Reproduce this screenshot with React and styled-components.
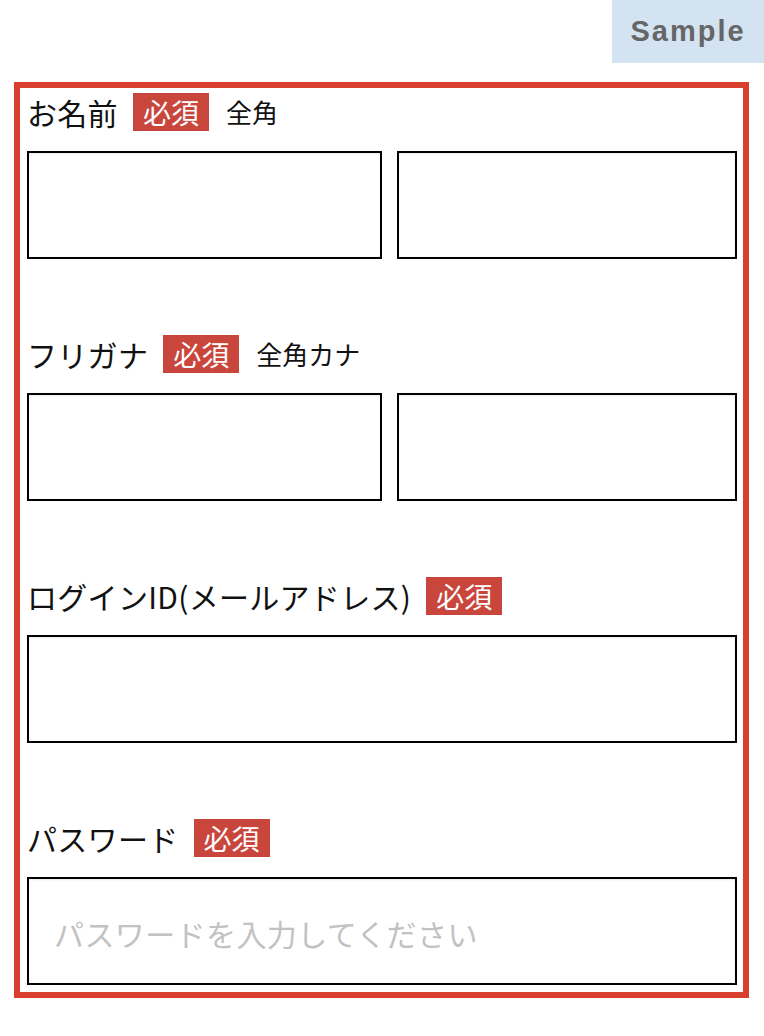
import React from 'react';
import styled, { createGlobalStyle } from 'styled-components';

const GlobalStyle = createGlobalStyle`
  body {
    margin: 0;
    background: #fff;
    font-family: "Noto Sans CJK JP", "Noto Sans", sans-serif;
    color: #111;
  }
`;

const Header = styled.header`
  display: flex;
  justify-content: flex-end;
`;

const SampleTag = styled.div`
  width: 152px;
  height: 63px;
  display: flex;
  align-items: center;
  justify-content: center;
  background: #d3e3f2;
  color: #666;
  font-family: "Liberation Sans", Arial, sans-serif;
  font-weight: bold;
  font-size: 29px;
  letter-spacing: 2px;
`;

const Frame = styled.form`
  margin: 19px 15px 0 14px;
  border: 6px solid #d83f2e;
  padding: 5px 6px 7px 7px;
`;

const Field = styled.div`
  & + & {
    margin-top: 76px;
  }
`;

const LabelRow = styled.div`
  display: flex;
  align-items: center;
  height: 38px;
`;

const Label = styled.label`
  font-size: 30px;
  line-height: 38px;
  letter-spacing: 0.3px;
`;

const Required = styled.span`
  margin-left: 15px;
  height: 38px;
  padding: 0 10px;
  background: #c9463c;
  color: #fff;
  font-size: 28px;
  line-height: 38px;
`;

const Hint = styled.span`
  margin-left: 17px;
  font-size: 26px;
  line-height: 38px;
`;

const InputRow = styled.div`
  display: flex;
  margin-top: 20px;
`;

const Input = styled.input`
  box-sizing: border-box;
  height: 108px;
  width: ${(props) => (props.half ? '50%' : '100%')};
  flex: ${(props) => (props.half ? 'none' : '1')};
  margin: 0;
  padding: 4px 25px 0;
  border: 2px solid #000;
  border-radius: 0;
  box-shadow: inset 0 1px 2px rgba(0, 0, 0, 0.08);
  background: #fff;
  font-family: "Noto Sans CJK JP", sans-serif;
  font-size: 30px;
  letter-spacing: 0.4px;
  outline: none;

  & + & {
    margin-left: 15px;
  }

  &::placeholder {
    color: #c2c2c2;
  }
`;

const fields = [
  { label: 'お名前', hint: '全角', split: true },
  { label: 'フリガナ', hint: '全角カナ', split: true },
  { label: 'ログインID(メールアドレス)', type: 'email' },
  { label: 'パスワード', type: 'password', placeholder: 'パスワードを入力してください' },
];

export default function App() {
  return (
    <>
      <GlobalStyle />
      <Header>
        <SampleTag>Sample</SampleTag>
      </Header>
      <Frame onSubmit={(e) => e.preventDefault()}>
        {fields.map((f) => (
          <Field key={f.label}>
            <LabelRow>
              <Label>{f.label}</Label>
              <Required>必須</Required>
              {f.hint && <Hint>{f.hint}</Hint>}
            </LabelRow>
            <InputRow>
              {f.split ? (
                <>
                  <Input half type="text" />
                  <Input type="text" />
                </>
              ) : (
                <Input type={f.type} placeholder={f.placeholder} />
              )}
            </InputRow>
          </Field>
        ))}
      </Frame>
    </>
  );
}
